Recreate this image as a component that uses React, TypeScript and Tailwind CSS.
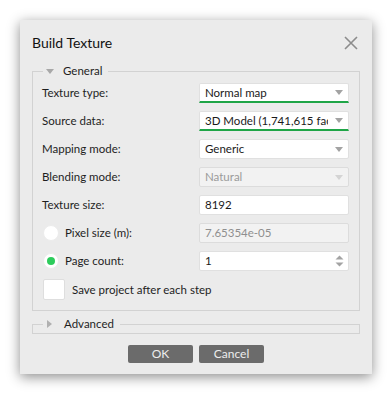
import { ReactNode } from 'react'

const txt = "font-['Lato','Liberation_Sans',sans-serif]"

function Arrow({ disabled }: { disabled?: boolean }) {
    return (
        <svg width="8" height="5" viewBox="0 0 8 5" className="shrink-0">
            <path d="M0 0H8L4 5Z" fill={disabled ? '#d4d4d4' : '#a3a3a3'} />
        </svg>
    )
}

function Combo({ value, green, disabled }: { value: string; green?: boolean; disabled?: boolean }) {
    return (
        <div
            className={`w-[150px] h-5 flex items-center justify-between pl-[5px] pr-[5px] rounded-[2px] overflow-hidden ${
                disabled ? 'bg-[#f2f2f2] border border-[#dcdcdc] text-[#9b9b9b]' : 'bg-white border border-[#e0e0e0] text-[#1a1a1a]'
            } ${green ? 'border-b-2 border-b-[#1fa547] rounded-b-none' : ''}`}
        >
            <span className="whitespace-nowrap overflow-hidden w-[123px]">{value}</span>
            <Arrow disabled={disabled} />
        </div>
    )
}

function Field({ value, disabled, spin }: { value: string; disabled?: boolean; spin?: boolean }) {
    return (
        <div
            className={`w-[150px] h-5 flex items-center justify-between pl-[5px] pr-[4px] rounded-[2px] ${
                disabled ? 'bg-[#f2f2f2] border border-[#dcdcdc] text-[#8f8f8f]' : 'bg-white border border-[#e0e0e0] text-[#1a1a1a]'
            }`}
        >
            <span>{value}</span>
            {spin && (
                <svg width="9" height="14" viewBox="0 0 9 14">
                    <path d="M0.5 5.5L4.5 1.5L8.5 5.5Z" fill="#a3a3a3" />
                    <path d="M0.5 8.5L4.5 12.5L8.5 8.5Z" fill="#a3a3a3" />
                </svg>
            )}
        </div>
    )
}

function Row({ label, children }: { label: ReactNode; children: ReactNode }) {
    return (
        <div className="h-5 flex items-center justify-between">
            <div className="flex items-center">{label}</div>
            {children}
        </div>
    )
}

function Radio({ on }: { on?: boolean }) {
    return (
        <div className="w-4 h-4 rounded-full bg-white border border-[#ececec] flex items-center justify-center ml-[1px] mr-[6px]">
            {on && <div className="w-2 h-2 rounded-full bg-[#2dcc5c]" />}
        </div>
    )
}

export default function App() {
    return (
        <div className={`w-[392px] h-[394px] bg-white pt-5 pl-5 ${txt} text-[11.5px] text-[#1e1e1e]`}>
            <div className="w-[352px] h-[354px] bg-[#ebebeb] shadow-[0_3px_12px_rgba(0,0,0,0.45)] flex flex-col">
                {/* Title */}
                <div className="h-[43px] shrink-0 flex items-start justify-between pl-3 pr-[14px] pt-[12px]">
                    <span className="text-[14px] leading-[22px] text-[#111]">Build Texture</span>
                    <svg width="14" height="14" viewBox="0 0 14 14" className="mt-[4px]">
                        <path d="M1 1L13 13M13 1L1 13" stroke="#8c8c8c" strokeWidth="1.6" />
                    </svg>
                </div>

                {/* General */}
                <fieldset className="mx-3 border border-[#d2d2d2] pl-[9px] pr-[10px] pt-1 pb-[10px] flex flex-col gap-2 leading-5">
                    <legend className="ml-[1px] h-4 flex items-center pl-[3px] pr-[6px]">
                        <svg width="8" height="5" viewBox="0 0 8 5" className="mr-[9px]">
                            <path d="M0 0H8L4 5Z" fill="#a8a8a8" />
                        </svg>
                        <span className="leading-4">General</span>
                    </legend>

                    <Row label="Texture type:">
                        <Combo value="Normal map" green />
                    </Row>
                    <Row label="Source data:">
                        <Combo value="3D Model (1,741,615 faces)" green />
                    </Row>
                    <Row label="Mapping mode:">
                        <Combo value="Generic" />
                    </Row>
                    <Row label="Blending mode:">
                        <Combo value="Natural" disabled />
                    </Row>
                    <Row label="Texture size:">
                        <Field value="8192" />
                    </Row>
                    <Row label={<><Radio /><span>Pixel size (m):</span></>}>
                        <Field value="7.65354e-05" disabled />
                    </Row>
                    <Row label={<><Radio on /><span>Page count:</span></>}>
                        <Field value="1" spin />
                    </Row>
                    <div className="h-[21px] flex items-center">
                        <div className="w-[22px] h-[21px] ml-[1px] mr-[7px] bg-white border border-[#dedede] rounded-[2px]" />
                        <span>Save project after each step</span>
                    </div>
                </fieldset>

                {/* Advanced */}
                <fieldset className="mx-3 mt-[5px] border border-[#d2d2d2] pb-[1px]">
                    <legend className="ml-[10px] h-4 flex items-center pl-[4px] pr-[6px]">
                        <svg width="5" height="8" viewBox="0 0 5 8" className="mr-[12px]">
                            <path d="M0 0V8L5 4Z" fill="#b0b0b0" />
                        </svg>
                        <span className="leading-4">Advanced</span>
                    </legend>
                </fieldset>

                {/* Buttons */}
                <div className="mt-[11px] flex justify-center gap-[6px]">
                    <button className="w-[65px] h-[18px] rounded-[2px] bg-[#6b6b6b] text-[#ededed] text-[12px] leading-[18px]">OK</button>
                    <button className="w-[65px] h-[18px] rounded-[2px] bg-[#6b6b6b] text-[#ededed] text-[12px] leading-[18px]">Cancel</button>
                </div>
            </div>
        </div>
    )
}
